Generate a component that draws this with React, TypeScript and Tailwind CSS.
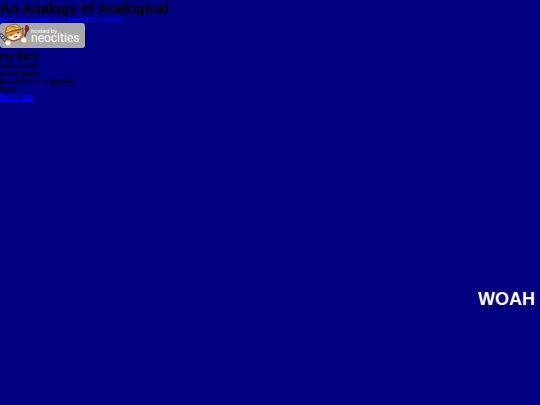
const likes = ["indie games", "snowy areas", "just cold stuff in general", "music"];

function Mascot() {
  return (
    <svg viewBox="0 0 31 25" className="h-[25px] w-[31px] shrink-0" aria-hidden="true">
      <path d="M1 12l7 8" stroke="#4b5270" strokeWidth="4" strokeLinecap="round" />
      <path d="M1 12l7 8" stroke="#b4bccb" strokeWidth="2" strokeDasharray="1.5 1" />
      <path d="M27 6l-3 10" stroke="#40304a" strokeWidth="1.6" />
      <path d="M26 2l2 1 1 3-2 3-2-2z" fill="#9c1736" stroke="#42203a" strokeWidth="0.7" />
      <path d="M6 9l0 5 3 3 5 1 6-2 3-4 0-7-3 2z" fill="#f28b2f" stroke="#59352c" strokeWidth="0.8" />
      <path d="M8 14l3-2 3 0 2-2 4 0 1 2-2 3-5 2-4-1z" fill="#fff4df" />
      <path d="M5 9L7 4l4-2 5-1 4 3 1 2-7 1-7 3z" fill="#efc343" stroke="#72502b" strokeWidth="0.8" />
      <path d="M6 8l4-3 10-1M9 3l7 1" stroke="#a76d26" strokeWidth="0.8" fill="none" />
      <path d="M11 11v2M18 9v2M14 14l2 0 1-1" stroke="#3d2428" strokeWidth="1.1" fill="none" />
      <circle cx="8" cy="20" r="3" fill="#fff" stroke="#d9975b" strokeWidth="0.8" />
      <circle cx="24" cy="17" r="3" fill="#fff" stroke="#d9975b" strokeWidth="0.8" />
    </svg>
  );
}

export default function App() {
  return (
    <main className="flex min-h-screen flex-col items-start bg-[#000080] font-['Liberation_Sans',Arial,sans-serif] text-[7px] leading-[8px] text-black">
      <h1 className="text-[14px] leading-[16px] font-bold">An Analogy of Analogical</h1>
      <p className="leading-[7px] text-[#0000ff]">hi! this is a website to introduce myself!</p>
      <a href="#neocities" aria-label="hosted by neocities" className="flex h-[25px] w-[85px] rounded-[3px] bg-[#a8a8a8] text-white">
        <Mascot />
        <span className="flex flex-col pt-1 font-['Roboto',sans-serif]">
          <span className="text-[6px] leading-[7px]">hosted by</span>
          <span className="text-[12px] leading-[9px]">neocities</span>
        </span>
      </a>
      <h2 className="mt-[3px] text-[10px] leading-[10px] font-bold">my likes</h2>
      <ul>
        {likes.map((like) => (
          <li key={like}>{like}</li>
        ))}
      </ul>
      <a href="#fella" className="leading-[7px] text-[#0000ff] underline">this lil' fella</a>
      <strong className="mt-[188px] mr-[5px] self-end text-[18px] leading-[22px] text-white">WOAH</strong>
    </main>
  );
}
